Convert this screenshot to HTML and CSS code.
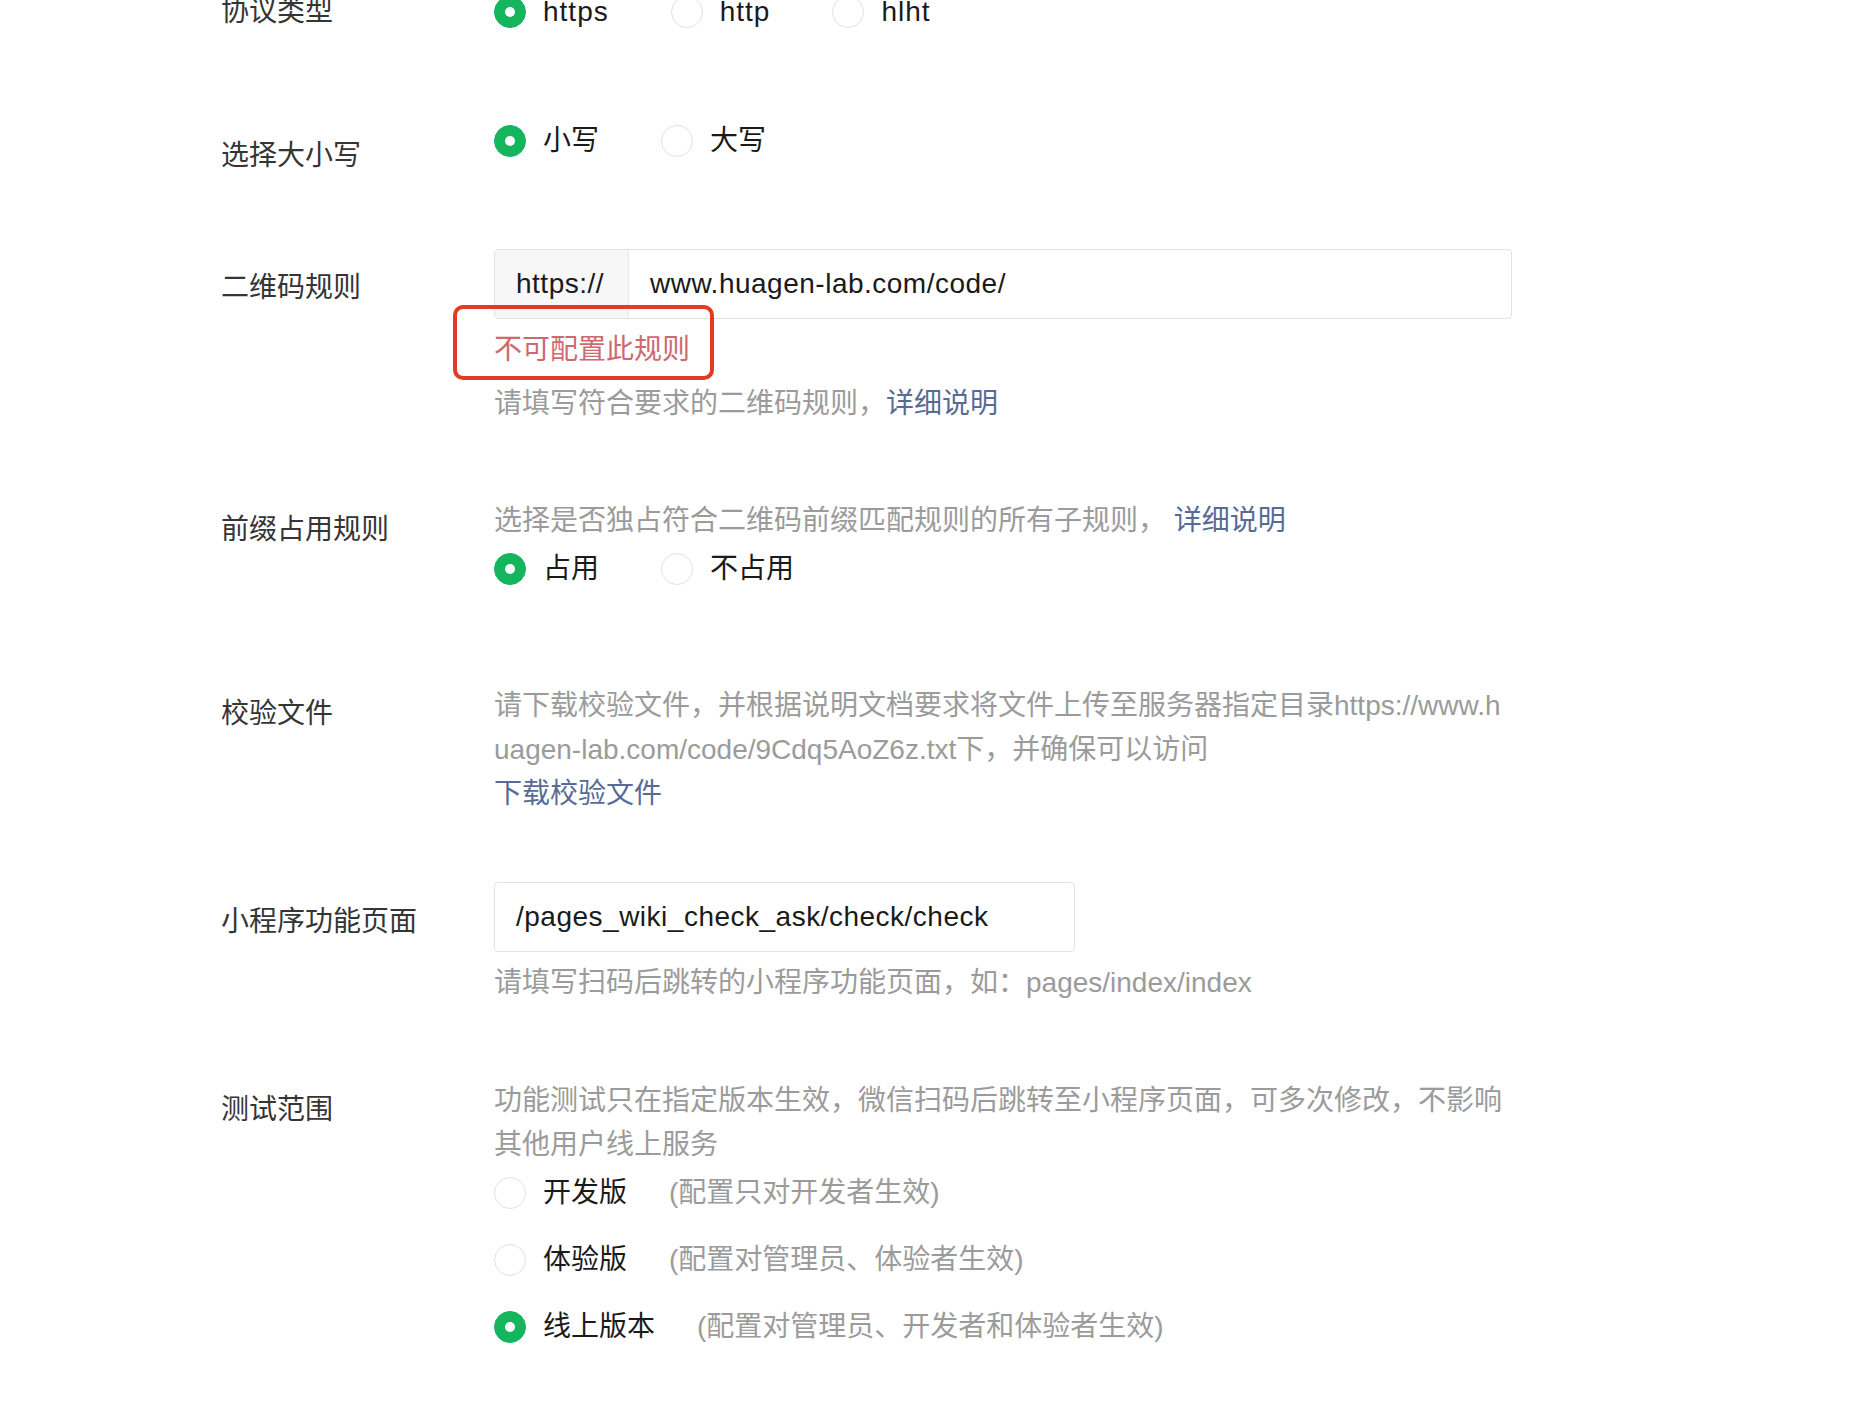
FILE: index.html
```html
<!DOCTYPE html>
<html lang="zh-CN">
<head>
<meta charset="utf-8">
<title>二维码规则配置</title>
<link rel="stylesheet" href="styles.css">
</head>
<body>
<div class="form">
  <div class="row row-protocol">
    <div class="label">协议类型</div>
    <div class="field">
      <div class="radio-group">
        <div class="radio checked"><span class="radio-dot"></span><span class="latin">https</span></div>
        <div class="radio"><span class="radio-dot"></span><span class="latin">http</span></div>
        <div class="radio"><span class="radio-dot"></span><span class="latin">hlht</span></div>
      </div>
    </div>
  </div>

  <div class="row row-case">
    <div class="label">选择大小写</div>
    <div class="field">
      <div class="radio-group">
        <div class="radio checked"><span class="radio-dot"></span><span>小写</span></div>
        <div class="radio"><span class="radio-dot"></span><span>大写</span></div>
      </div>
    </div>
  </div>

  <div class="row row-qrcode">
    <div class="label">二维码规则</div>
    <div class="field">
      <div class="input">
        <div class="input-prefix">https://</div>
        <div class="input-value">www.huagen-lab.com/code/</div>
      </div>
      <div class="error">不可配置此规则</div>
      <div class="help help-after-error">请填写符合要求的二维码规则，<a class="link">详细说明</a></div>
      <div class="annotation"></div>
    </div>
  </div>

  <div class="row row-prefix">
    <div class="label">前缀占用规则</div>
    <div class="field">
      <div class="help">选择是否独占符合二维码前缀匹配规则的所有子规则， <a class="link">详细说明</a></div>
      <div class="radio-group radio-group-below">
        <div class="radio checked"><span class="radio-dot"></span><span>占用</span></div>
        <div class="radio"><span class="radio-dot"></span><span>不占用</span></div>
      </div>
    </div>
  </div>

  <div class="row row-verify">
    <div class="label">校验文件</div>
    <div class="field">
      <div class="help wrap">请下载校验文件，并根据说明文档要求将文件上传至服务器指定目录https://www.huagen-lab.com/code/9Cdq5AoZ6z.txt下，并确保可以访问</div>
      <a class="link block">下载校验文件</a>
    </div>
  </div>

  <div class="row row-page">
    <div class="label">小程序功能页面</div>
    <div class="field">
      <div class="input input-short">
        <div class="input-value">/pages_wiki_check_ask/check/check</div>
      </div>
      <div class="help help-after-input">请填写扫码后跳转的小程序功能页面，如：pages/index/index</div>
    </div>
  </div>

  <div class="row row-scope">
    <div class="label">测试范围</div>
    <div class="field">
      <div class="help wrap">功能测试只在指定版本生效，微信扫码后跳转至小程序页面，可多次修改，不影响其他用户线上服务</div>
      <div class="radio-list">
        <div class="radio"><span class="radio-dot"></span><span>开发版</span><span class="hint">(配置只对开发者生效)</span></div>
        <div class="radio"><span class="radio-dot"></span><span>体验版</span><span class="hint">(配置对管理员、体验者生效)</span></div>
        <div class="radio checked"><span class="radio-dot"></span><span>线上版本</span><span class="hint">(配置对管理员、开发者和体验者生效)</span></div>
      </div>
    </div>
  </div>
</div>
</body>
</html>
```

FILE: styles.css
```css
* {
  box-sizing: border-box;
}

html, body {
  margin: 0;
  background: #ffffff;
  overflow: hidden;
}

body {
  font-family: "Liberation Sans", "Noto Sans CJK SC", sans-serif;
  font-size: 28px;
  line-height: 44px;
  color: #353535;
}

.form {
  padding-left: 221px;
}

.row {
  display: flex;
  align-items: flex-start;
}

.label {
  width: 273px;
  flex: none;
  padding-top: 9px;
  color: #353535;
}

.field {
  position: relative;
  width: 1018px;
}

/* row spacing */
.row-protocol { margin-top: -10px; }
.row-protocol .label { padding-top: 0; }
.row-case { margin-top: 85px; }
.row-case .label { padding-top: 15px; }
.row-qrcode { margin-top: 71px; }
.row-qrcode .label { padding-top: 17px; }
.row-prefix { margin-top: 73px; }
.row-verify { margin-top: 93px; }
.row-verify .label { padding-top: 8px; }
.row-page { margin-top: 66px; }
.row-page .label { padding-top: 18px; }
.row-scope { margin-top: 74px; }

/* radios */
.radio-group {
  display: flex;
  gap: 62px;
}

.radio-group-below {
  margin-top: 4px;
}

.radio {
  display: flex;
  align-items: center;
  gap: 17px;
  color: #1a1a1a;
}

.latin {
  letter-spacing: 1px;
}

.radio-dot {
  position: relative;
  flex: none;
  width: 32px;
  height: 32px;
  border-radius: 50%;
  border: 1.5px solid #e2e2e2;
  background: #ffffff;
}

.radio.checked .radio-dot {
  background: #15b55e;
  border-color: #15b55e;
}

.radio.checked .radio-dot::after {
  content: "";
  position: absolute;
  left: 50%;
  top: 50%;
  width: 10px;
  height: 10px;
  margin: -5px 0 0 -5px;
  border-radius: 50%;
  background: #ffffff;
}

.radio-list {
  display: flex;
  flex-direction: column;
  gap: 23px;
  margin-top: 4px;
}

.hint {
  color: #9b9b9b;
  margin-left: 25px;
}

/* inputs */
.input {
  display: flex;
  height: 70px;
  border: 1px solid #e3e3e3;
  border-radius: 4px;
  overflow: hidden;
  color: #1a1a1a;
}

.input-short {
  width: 581px;
}

.input-prefix {
  display: flex;
  align-items: center;
  width: 134px;
  padding-left: 21px;
  background: #f7f7f7;
  border-right: 1px solid #e8e8e8;
  letter-spacing: 0.5px;
}

.input-value {
  display: flex;
  align-items: center;
  padding-left: 21px;
  letter-spacing: 0.5px;
}

/* texts */
.error {
  margin-top: 9px;
  color: #cf6870;
}

.help {
  color: #9b9b9b;
}

.help-after-error {
  margin-top: 10px;
}

.help-after-input {
  margin-top: 9px;
}

.wrap {
  word-break: break-all;
}

.link {
  color: #576b95;
  text-decoration: none;
}

.block {
  display: block;
}

/* red annotation frame drawn over the form */
.annotation {
  position: absolute;
  left: -41px;
  top: 56px;
  width: 261px;
  height: 75px;
  border: 4px solid #e33a26;
  border-radius: 10px;
}
```
